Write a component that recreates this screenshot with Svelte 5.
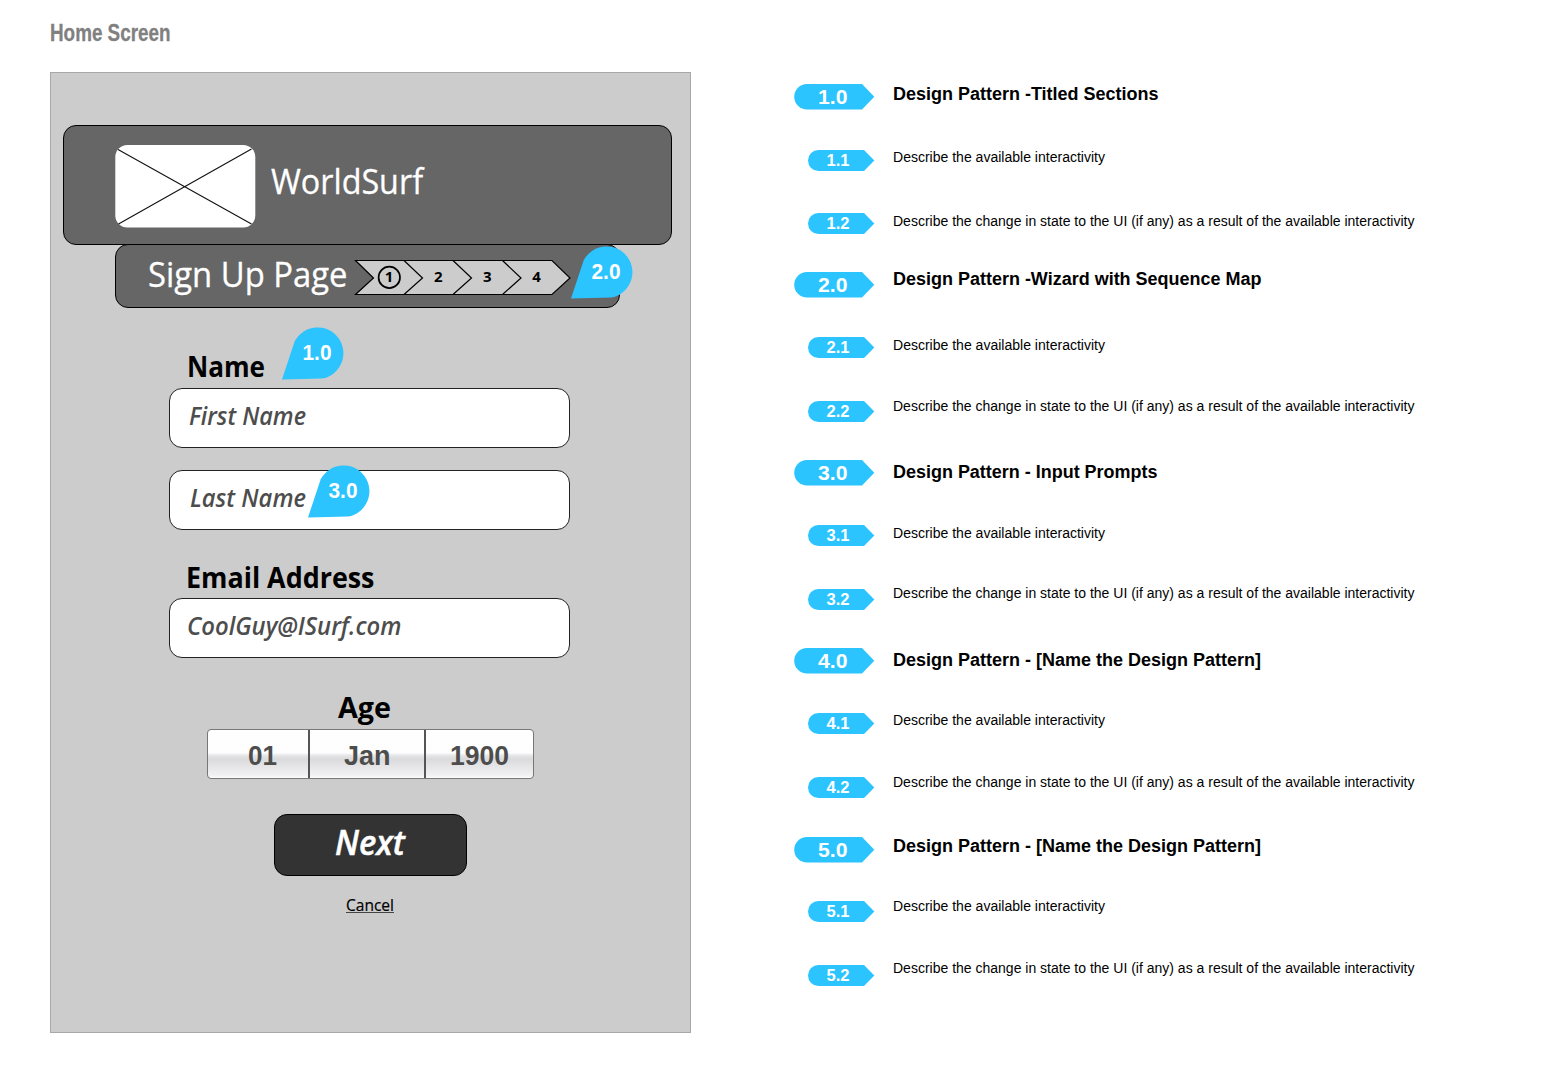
<script>
  const notes = [
    { id: '1.0', title: 'Design Pattern -Titled Sections', width: 265.5, base: 16, step: 66 },
    { id: '1.1', text: 0, base: 12, step: 63 },
    { id: '1.2', text: 1, base: 13, step: 59 },
    { id: '2.0', title: 'Design Pattern -Wizard with Sequence Map', width: 368.5, base: 13, step: 65 },
    { id: '2.1', text: 0, base: 13, step: 64 },
    { id: '2.2', text: 1, base: 10, step: 59 },
    { id: '3.0', title: 'Design Pattern - Input Prompts', width: 264.5, base: 18, step: 65 },
    { id: '3.1', text: 0, base: 13, step: 64 },
    { id: '3.2', text: 1, base: 9, step: 59 },
    { id: '4.0', title: 'Design Pattern - [Name the Design Pattern]', width: 368, base: 18, step: 65 },
    { id: '4.1', text: 0, base: 12, step: 64 },
    { id: '4.2', text: 1, base: 10, step: 60 },
    { id: '5.0', title: 'Design Pattern - [Name the Design Pattern]', width: 368, base: 15, step: 64 },
    { id: '5.1', text: 0, base: 10, step: 64 },
    { id: '5.2', text: 1, base: 8, step: 26 }
  ];
  const texts = [
    { label: 'Describe the available interactivity', width: 212 },
    { label: 'Describe the change in state to the UI (if any) as a result of the available interactivity', width: 521.5 }
  ];
  const steps = [1, 2, 3, 4];
</script>

{#snippet fit(label, width, height, base, cls)}
  <svg class="fit {cls}" {width} {height}>
    <text x="0" y={base} textLength={width} lengthAdjust="spacingAndGlyphs">{label}</text>
  </svg>
{/snippet}

{#snippet pin(label, cls)}
  <svg class="pin {cls}" width="62" height="54" viewBox="0 0 62 54">
    <path d="M0 52.5 L12.7 14.3 A25.800 25.800 0 1 1 40 51.600 Z" />
    <text x="20.5" y="33" textLength="29" lengthAdjust="spacingAndGlyphs">{label}</text>
  </svg>
{/snippet}

<main>
  <section class="left">
    <h1>{@render fit('Home Screen', 120.5, 30, 23, 'heading')}</h1>
    <div class="screen">
      <header>
        <svg class="logo" width="141" height="83" viewBox="0 0 141 83">
          <rect x="0.3" y="0" width="140" height="82.5" rx="12" fill="#fff" />
          <path d="M3 4.5 L136.500 79 M3.500 79 L136.500 4" stroke="#111" stroke-width="1.1" />
        </svg>
        {@render fit('WorldSurf', 152, 50, 49, 'brand')}
      </header>
      <div class="subheader">
        {@render fit('Sign Up Page', 199.5, 50, 37, 'page-title')}
        <svg class="wizard" width="218" height="36" viewBox="0 0 218 36">
          <path d="M1.500 1.500 H198 L216 19 L198 35.500 H1.500 L19.500 19 Z" />
          <path d="M50 1.500 L68.500 19 L50 35.500 M99 1.500 L117.500 19 L99 35.500 M148.500 1.500 L167 19 L148.500 35.500" />
          <circle cx="35.3" cy="18.400" r="10.700" />
          {#each steps as n, i}
            <text x={35 + i * 49.2} y="23">{n}</text>
          {/each}
        </svg>
      </div>

      <div class="form">
        {@render fit('Name', 78, 40, 29, 'label name')}
        <div class="field">{@render fit('First Name', 117, 40, 28, 'prompt')}</div>
        <div class="field second">{@render fit('Last Name', 116, 40, 28, 'prompt')}</div>
        {@render fit('Email Address', 188.5, 40, 30, 'label email')}
        <div class="field mail">{@render fit('CoolGuy@ISurf.com', 214.5, 40, 28, 'prompt')}</div>
      </div>

      {@render fit('Age', 53, 41, 30, 'label age')}
      <div class="dates">
        <div class="day">{@render fit('01', 29, 40, 31, 'date')}</div>
        <div class="month">{@render fit('Jan', 46.5, 40, 31, 'date')}</div>
        <div class="year">{@render fit('1900', 59, 40, 31, 'date')}</div>
      </div>
      <button>{@render fit('Next', 70, 50, 36, 'next')}</button>
      <div class="cancel">
        {@render fit('Cancel', 48, 20, 19, 'cancel-text')}
      </div>

      {@render pin('2.0', 'p2')}
      {@render pin('1.0', 'p1')}
      {@render pin('3.0', 'p3')}
    </div>
  </section>

  <section class="notes">
    {#each notes as n}
      <div class="note" style:height="{n.step}px">
        {#if n.title}
          <svg class="tag" width="81" height="26" viewBox="0 0 81 26">
            <path d="M13 0 H68 L80.300 12.800 L68 25.600 H13 A12.800 12.800 0 0 1 13 0 Z" />
            <text x="24" y="20" font-size="21" textLength="29.500" lengthAdjust="spacingAndGlyphs">{n.id}</text>
          </svg>
          {@render fit(n.title, n.width, 26, n.base, 'title')}
        {:else}
          <svg class="tag small" width="67" height="22" viewBox="0 0 67 22">
            <path d="M10.500 0 H56 L66.300 10.500 L56 21 H10.500 A10.500 10.500 0 0 1 10.500 0 Z" />
            <text x="18.500" y="15.500" font-size="16.500" textLength="23" lengthAdjust="spacingAndGlyphs">{n.id}</text>
          </svg>
          {@render fit(texts[n.text].label, texts[n.text].width, 22, n.base, 'desc')}
        {/if}
      </div>
    {/each}
  </section>
</main>

<style>
  :global(body) {
    background: #fff;
  }
  main {
    width: 1542px;
    height: 1073px;
    box-sizing: border-box;
    display: flex;
    align-items: flex-start;
    padding-left: 50px;
    overflow: hidden;
    font-family: 'Liberation Sans', Arial, sans-serif;
  }
  svg {
    display: block;
    flex: none;
    overflow: visible;
  }
  .left {
    width: 641px;
    padding-top: 18px;
  }
  h1 {
    margin: 0 0 24px;
    height: 30px;
  }
  .heading {
    fill: #808080;
    stroke: #808080;
    stroke-width: 0.3;
    font: bold 23px 'Liberation Sans', sans-serif;
  }
  .screen {
    position: relative;
    box-sizing: border-box;
    width: 641px;
    height: 961px;
    border: 1px solid #a8a8a8;
    background: #ccc;
    display: flex;
    flex-direction: column;
    align-items: flex-start;
  }
  header,
  .subheader {
    box-sizing: border-box;
    display: flex;
    border: 1px solid #000;
    border-radius: 13px;
    background: #666;
    flex: none;
  }
  header {
    width: 609px;
    height: 120px;
    margin: 52px 0 0 12px;
    padding: 19px 0 0 51px;
    gap: 15px;
  }
  .brand {
    fill: #fff;
    stroke: #fff;
    stroke-width: 0.3;
    font: 34.500px 'Open Sans', sans-serif;
  }
  .subheader {
    width: 505px;
    height: 64px;
    margin: -1px 0 0 64px;
    padding: 5px 0 0 32px;
  }
  .page-title {
    fill: #fff;
    stroke: #fff;
    stroke-width: 0.3;
    font: 34px 'Open Sans', sans-serif;
  }
  .wizard {
    margin: 9px 0 0 6.5px;
    fill: #ccc;
    stroke: #000;
    stroke-width: 1.2;
  }
  .wizard circle {
    stroke-width: 1.7;
    fill: none;
  }
  .wizard text {
    fill: #000;
    stroke: none;
    text-anchor: middle;
    font: bold 15px 'Open Sans', sans-serif;
  }
  .form {
    margin: 40px 0 0 118px;
  }
  .label {
    fill: #000;
    font: bold 28px 'Open Sans', sans-serif;
  }
  .name {
    margin-left: 18px;
  }
  .email {
    margin: 28px 0 0 17px;
  }
  .age {
    margin: 30px 0 0 287px;
  }
  .field {
    box-sizing: border-box;
    width: 401px;
    height: 60px;
    padding: 8px 0 0 19px;
    border: 1px solid #222;
    border-radius: 13px;
    background: #fff;
  }
  .second {
    margin-top: 22px;
    padding-left: 20px;
  }
  .mail {
    padding-left: 16.5px;
  }
  .prompt {
    fill: #4d4d4d;
    font: italic 600 25px 'Open Sans', sans-serif;
  }
  .dates {
    box-sizing: border-box;
    display: flex;
    width: 327px;
    height: 50px;
    margin-left: 156px;
    border: 1px solid #777;
    border-radius: 4px;
    overflow: hidden;
    background: linear-gradient(#fff 0%, #fdfdfd 48%, #e9e9eb 52%, #dadadc 60%, #f3f3f5 96%, #fff 100%);
  }
  .dates > div {
    box-sizing: border-box;
    height: 48px;
    padding-top: 4px;
  }
  .day {
    width: 102px;
    padding-left: 40px;
    border-right: 2px solid #555;
  }
  .month {
    width: 116px;
    padding-left: 34px;
    border-right: 2px solid #555;
  }
  .year {
    padding-left: 24px;
  }
  .date {
    fill: #4d4d4d;
    font: bold 28px 'Liberation Sans', sans-serif;
  }
  button {
    box-sizing: border-box;
    width: 193px;
    height: 62px;
    margin: 35px 0 0 223px;
    padding: 4px 0 0 60px;
    border: 1px solid #000;
    border-radius: 13px;
    background: #333;
    display: flex;
    align-items: flex-start;
  }
  .next {
    fill: #fff;
    stroke: #fff;
    stroke-width: 0.5;
    font: italic 600 34.500px 'Open Sans', sans-serif;
  }
  .cancel {
    margin: 16px 0 0 295px;
    border-bottom: 1px solid #444;
  }
  .cancel-text {
    fill: #000;
    stroke: #000;
    stroke-width: 0.2;
    font: 16px 'Open Sans', sans-serif;
  }
  .pin {
    position: absolute;
    fill: #2bc4ff;
  }
  .pin text {
    fill: #fff;
    font: bold 22px 'Liberation Sans', sans-serif;
  }
  .p1 {
    left: 230.5px;
    top: 254px;
  }
  .p2 {
    left: 519.5px;
    top: 173px;
  }
  .p3 {
    left: 257px;
    top: 392px;
  }
  .notes {
    margin-left: 103px;
    padding-top: 84px;
  }
  .note {
    display: flex;
    align-items: flex-start;
    gap: 17.5px;
  }
  .tag {
    fill: #2bc4ff;
  }
  .tag text {
    fill: #fff;
    font-weight: bold;
  }
  .small {
    margin-left: 14px;
  }
  .title {
    font: bold 18px 'Liberation Sans', sans-serif;
  }
  .desc {
    font: 14px 'Liberation Sans', sans-serif;
  }
</style>
